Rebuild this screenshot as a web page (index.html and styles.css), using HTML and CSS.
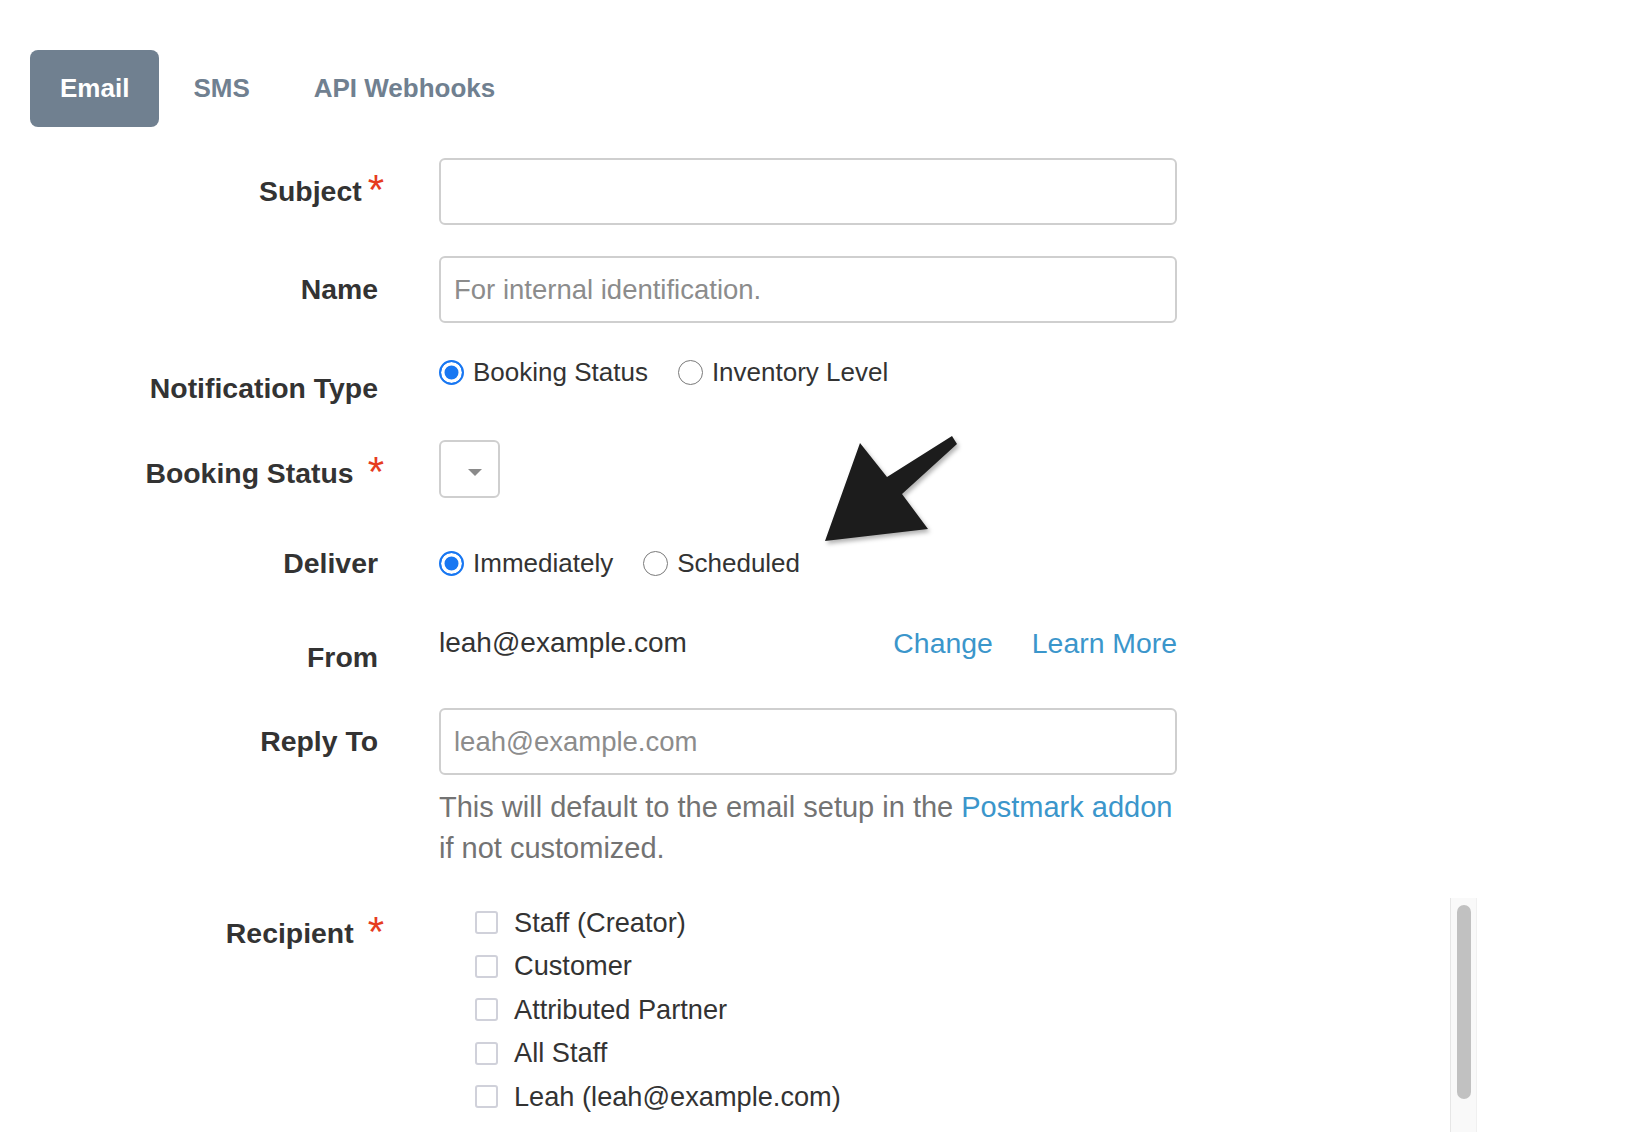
FILE: index.html
```html
<!DOCTYPE html>
<html lang="en">
<head>
<meta charset="utf-8">
<title>Notification</title>
<link rel="stylesheet" href="styles.css">
</head>
<body>
<div class="page">
  <nav class="tabs">
    <a class="tab tab-active">Email</a>
    <a class="tab">SMS</a>
    <a class="tab">API Webhooks</a>
  </nav>

  <form class="form">
    <div class="row row-subject">
      <label class="label">Subject<span class="req">*</span></label>
      <div class="control"><input class="input" type="text"></div>
    </div>

    <div class="row row-name">
      <label class="label">Name</label>
      <div class="control"><input class="input" type="text" placeholder="For internal identification."></div>
    </div>

    <div class="row row-type">
      <label class="label">Notification Type</label>
      <div class="control choices">
        <label class="choice"><input class="radio" type="radio" name="type" checked>Booking Status</label>
        <label class="choice"><input class="radio" type="radio" name="type">Inventory Level</label>
      </div>
    </div>

    <div class="row row-status">
      <label class="label">Booking Status<span class="req req-wide">*</span></label>
      <div class="control">
        <div class="select"><span class="caret"></span></div>
      </div>
    </div>

    <div class="row row-deliver">
      <label class="label">Deliver</label>
      <div class="control choices choices-center">
        <label class="choice"><input class="radio" type="radio" name="deliver" checked>Immediately</label>
        <label class="choice"><input class="radio" type="radio" name="deliver">Scheduled</label>
      </div>
    </div>

    <div class="row row-from">
      <label class="label">From</label>
      <div class="control from">
        <span class="from-email">leah@example.com</span>
        <span class="links"><a class="link">Change</a><a class="link">Learn More</a></span>
      </div>
    </div>

    <div class="row row-reply">
      <label class="label">Reply To</label>
      <div class="control">
        <input class="input" type="text" placeholder="leah@example.com">
        <p class="help">This will default to the email setup in the <a class="link">Postmark addon</a> if not customized.</p>
      </div>
    </div>

    <div class="row row-recipient">
      <label class="label">Recipient<span class="req req-wide">*</span></label>
      <div class="control recipients">
        <ul class="check-list">
          <li class="check"><input class="checkbox" type="checkbox">Staff (Creator)</li>
          <li class="check"><input class="checkbox" type="checkbox">Customer</li>
          <li class="check"><input class="checkbox" type="checkbox">Attributed Partner</li>
          <li class="check"><input class="checkbox" type="checkbox">All Staff</li>
          <li class="check"><input class="checkbox" type="checkbox">Leah (leah@example.com)</li>
        </ul>
        <div class="scrollbar"><div class="scrollbar-thumb"></div></div>
      </div>
    </div>
  </form>

  <svg class="arrow" viewBox="0 0 150 120" width="150" height="120">
    <polygon points="10,111 45,13 72,47 137,6 142,14 87,64 113,99" fill="#1c1c1c"/>
  </svg>
</div>
</body>
</html>
```

FILE: styles.css
```css
html, body {
  margin: 0;
  padding: 0;
  background: #ffffff;
  overflow: hidden;
}

body {
  font-family: "Liberation Sans", Arial, Helvetica, sans-serif;
  color: #333333;
}

.page {
  position: relative;
  box-sizing: border-box;
  height: 1132px;
  padding: 50px 0 0 30px;
}

/* Tabs */
.tabs {
  display: flex;
  gap: 4px;
}

.tab {
  display: flex;
  align-items: center;
  height: 77px;
  padding: 0 30px;
  border-radius: 8px;
  font-size: 26px;
  font-weight: 700;
  color: #708090;
}

.tab-active {
  background: #708090;
  color: #ffffff;
}

/* Form layout */
.form {
  display: flex;
  flex-direction: column;
}

.row {
  display: flex;
  align-items: flex-start;
}

.row-subject { margin-top: 31px; }
.row-name { margin-top: 31px; }
.row-type { margin-top: 32px; }
.row-status { margin-top: 18px; }
.row-deliver { margin-top: 22.5px; }
.row-from { margin-top: 27px; }
.row-reply { margin-top: 17.5px; }
.row-recipient { margin-top: 31px; }

.label {
  flex: none;
  width: 348px;
  margin-right: 61px;
  height: 67px;
  line-height: 67px;
  text-align: right;
  white-space: nowrap;
  font-size: 28.4px;
  font-weight: 700;
  color: #333333;
}

.req {
  display: inline-block;
  line-height: 0;
  font-size: 42px;
  font-weight: 400;
  color: #e63c1e;
  vertical-align: -3px;
  margin-left: 6px;
  margin-right: -6px;
}

.req-wide {
  margin-left: 14px;
}

.control {
  flex: none;
}

/* Inputs */
.input {
  display: block;
  box-sizing: border-box;
  width: 738px;
  height: 67px;
  margin: 0;
  padding: 0 13px;
  border: 2px solid #cfcfcf;
  border-radius: 6px;
  background: #ffffff;
  font-family: "Liberation Sans", Arial, Helvetica, sans-serif;
  font-size: 27.5px;
  color: #333333;
  outline: none;
}

.input::placeholder {
  color: #8c8c8c;
}

/* Radios */
.choices {
  display: flex;
  align-items: center;
  height: 35px;
}

.choices-center {
  height: 67px;
}

.choice {
  display: flex;
  align-items: center;
  margin-right: 30px;
  font-size: 26px;
  color: #333333;
}

.radio {
  appearance: none;
  -webkit-appearance: none;
  box-sizing: border-box;
  width: 25px;
  height: 25px;
  margin: 0 9px 0 0;
  border: 1.5px solid #7a7a7a;
  border-radius: 50%;
  background: #ffffff;
}

.radio:checked {
  border: 2px solid #1877f2;
  background: #1877f2;
  box-shadow: inset 0 0 0 3.5px #ffffff;
}

/* Select */
.select {
  display: flex;
  align-items: center;
  box-sizing: border-box;
  width: 61px;
  height: 58px;
  padding: 6px 0 0 27px;
  border: 2px solid #cfcfcf;
  border-radius: 6px;
}

.caret {
  width: 0;
  height: 0;
  border-left: 7px solid transparent;
  border-right: 7px solid transparent;
  border-top: 7px solid #8a8a8a;
}

/* From */
.from {
  display: flex;
  align-items: center;
  justify-content: space-between;
  width: 738px;
  height: 39px;
}

.from-email {
  font-size: 28px;
  color: #333333;
}

.links {
  display: flex;
  gap: 39px;
}

.link {
  color: #3b96cb;
  font-size: 28.4px;
}

/* Help */
.help {
  width: 738px;
  margin: 11.5px 0 0;
  font-size: 29px;
  line-height: 41px;
  color: #737373;
}

.help .link {
  font-size: 29px;
}

/* Recipients */
.recipients {
  display: flex;
  box-sizing: border-box;
  width: 1038px;
  height: 234px;
  margin-top: -2px;
  overflow: hidden;
}

.check-list {
  flex: 1;
  list-style: none;
  margin: 0;
  padding: 3.5px 0 0 36px;
}

.check {
  display: flex;
  align-items: center;
  height: 43.5px;
  font-size: 27.2px;
  color: #333333;
}

.checkbox {
  appearance: none;
  -webkit-appearance: none;
  box-sizing: border-box;
  width: 23px;
  height: 23px;
  margin: 0 16px 0 0;
  border: 2px solid #d0d1da;
  border-radius: 3px;
  background: #ffffff;
}

.scrollbar {
  flex: none;
  box-sizing: border-box;
  width: 27px;
  padding: 7px 5px 0 6px;
  background: #f9f9f9;
  border-left: 1px solid #e6e6e6;
  border-right: 1px solid #f0f0f0;
}

.scrollbar-thumb {
  height: 194px;
  border-radius: 8px;
  background: #c1c1c1;
}

/* Annotation arrow */
.arrow {
  position: absolute;
  left: 815px;
  top: 430px;
  overflow: visible;
  filter: drop-shadow(2px 3px 2px rgba(0, 0, 0, 0.3));
}
```
